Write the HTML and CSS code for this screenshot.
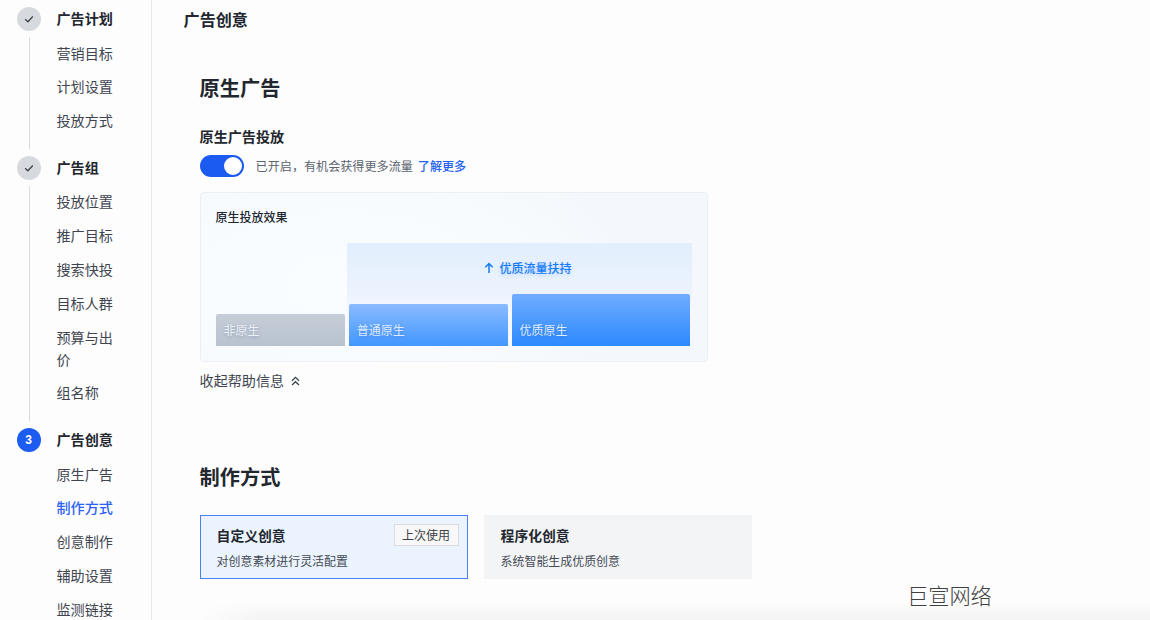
FILE: index.html
```html
<!DOCTYPE html>
<html lang="zh-CN">
<head>
<meta charset="utf-8">
<title>广告创意</title>
<link rel="stylesheet" href="styles.css">
</head>
<body>
<div class="app">
  <nav class="sidebar">
    <section class="step">
      <div class="rail">
        <span class="dot"><svg width="12" height="12" viewBox="0 0 12 12"><path d="M2.2 6.2 4.9 8.8 9.8 3.5"/></svg></span>
        <span class="line"></span>
      </div>
      <div class="step-body">
        <h4 class="step-title">广告计划</h4>
        <ul class="links"><li>营销目标</li><li>计划设置</li><li>投放方式</li></ul>
      </div>
    </section>
    <section class="step">
      <div class="rail">
        <span class="dot"><svg width="12" height="12" viewBox="0 0 12 12"><path d="M2.2 6.2 4.9 8.8 9.8 3.5"/></svg></span>
        <span class="line"></span>
      </div>
      <div class="step-body">
        <h4 class="step-title">广告组</h4>
        <ul class="links"><li>投放位置</li><li>推广目标</li><li>搜索快投</li><li>目标人群</li><li>预算与出价</li><li>组名称</li></ul>
      </div>
    </section>
    <section class="step">
      <div class="rail"><span class="dot current">3</span></div>
      <div class="step-body">
        <h4 class="step-title">广告创意</h4>
        <ul class="links"><li>原生广告</li><li class="active">制作方式</li><li>创意制作</li><li>辅助设置</li><li>监测链接</li></ul>
      </div>
    </section>
  </nav>
  <main class="main">
    <h1 class="page-title">广告创意</h1>
    <div class="content">
      <h2 class="section-title">原生广告</h2>
      <h3 class="field-title">原生广告投放</h3>
      <div class="switch-row">
        <span class="switch"><span class="knob"></span></span>
        <span class="hint">已开启，有机会获得更多流量</span>
        <a class="more">了解更多</a>
      </div>
      <div class="effect">
        <div class="effect-title">原生投放效果</div>
        <div class="chart">
          <div class="bar plain">非原生</div>
          <div class="boost">
            <div class="boost-label">
              <svg width="10" height="12" viewBox="0 0 10 12"><path d="M5 11V1.6M1.3 5.2 5 1.5 8.7 5.2"/></svg>
              <span>优质流量扶持</span>
            </div>
            <div class="boost-bars">
              <div class="bar normal">普通原生</div>
              <div class="bar premium">优质原生</div>
            </div>
          </div>
        </div>
      </div>
      <div class="collapse">
        <span>收起帮助信息</span>
        <svg width="9" height="10" viewBox="0 0 9 10"><path d="M1 4.7 4.5 1.4 8 4.7M1 9 4.5 5.7 8 9"/></svg>
      </div>
      <h2 class="section-title second">制作方式</h2>
      <div class="options">
        <div class="option selected">
          <div class="option-name">自定义创意</div>
          <div class="option-desc">对创意素材进行灵活配置</div>
          <span class="tag">上次使用</span>
        </div>
        <div class="option">
          <div class="option-name">程序化创意</div>
          <div class="option-desc">系统智能生成优质创意</div>
        </div>
      </div>
    </div>
    <div class="footer-shade"></div>
    <div class="signature">巨宣网络</div>
  </main>
</div>
</body>
</html>
```
FILE: styles.css
```css
* { box-sizing: border-box; }
body {
  margin: 0;
  background: #fdfdfd;
  color: #22262e;
  font-family: "Noto Sans CJK SC", sans-serif;
  font-size: 14.1px;
}
h1, h2, h3, h4, ul { margin: 0; padding: 0; }
svg { display: block; fill: none; stroke: currentColor; }

.app { display: flex; width: 1150px; height: 620px; overflow: hidden; }

/* Step navigation */
.sidebar {
  flex: none;
  width: 152px;
  padding: 7px 0 0 16.6px;
  border-right: 1px solid #e8e9eb;
}
.step { display: flex; gap: 15.9px; }
.rail { display: flex; flex-direction: column; align-items: center; width: 24px; }
.dot {
  display: flex;
  flex: none;
  align-items: center;
  justify-content: center;
  width: 24px;
  height: 24px;
  border-radius: 50%;
  background: #d6dade;
  color: #3e444d;
}
.dot svg { stroke-width: 1.3; }
.dot.current {
  background: #1c5cf0;
  color: #fff;
  font: bold 12px/24px "Liberation Sans", sans-serif;
}
.line { flex: 1; width: 1px; margin: 6px 0 7px 1px; background: #d9dbde; }
.step-body { padding-bottom: 18.6px; }
.step-title { height: 24px; margin-bottom: 4.8px; font-size: 14.1px; font-weight: 700; line-height: 22px; }
.links { width: 57px; list-style: none; color: #3f4550; line-height: 22px; }
.links li { padding: 5.9px 0; }
.links .active { color: #2b62f5; font-weight: 500; }

/* Main column */
.main { position: relative; flex: 1; padding: 7px 0 0 31.6px; }
.page-title { font-size: 16.1px; font-weight: 700; line-height: 24px; }
.content { padding: 42px 0 0 16px; }
.section-title { font-size: 20.2px; font-weight: 700; line-height: 30px; }
.field-title { margin-top: 22px; font-size: 14.1px; font-weight: 700; line-height: 22px; }
.switch-row { display: flex; align-items: center; height: 22px; margin-top: 8.4px; font-size: 12.1px; }
.switch {
  display: flex;
  align-items: center;
  justify-content: flex-end;
  width: 44px;
  height: 22px;
  padding: 2px;
  border-radius: 11px;
  background: #1b5bf0;
}
.knob { width: 18px; height: 18px; border-radius: 50%; background: #fff; }
.hint, .more { line-height: 20px; }
.hint { margin-left: 12px; color: #5c6470; }
.more { margin-left: 5px; color: #2460f2; font-weight: 500; }

.effect {
  width: 508.6px;
  height: 170.4px;
  margin-top: 14.2px;
  padding: 15.4px 15px 13px;
  border: 1px solid #edf0f3;
  border-radius: 4px;
  background: radial-gradient(ellipse 300px 150px at 28% 55%, #fafdff 0%, #f9fcff 40%, #f4f8fc 100%);
}
.effect-title { height: 18px; font-size: 12px; font-weight: 500; line-height: 18px; }
.chart { display: flex; align-items: flex-end; height: 103.5px; margin-top: 16.9px; gap: 2px; }
.bar {
  display: flex;
  align-items: flex-end;
  padding: 0 8px 6px;
  border-radius: 2px 2px 0 0;
  color: #dfecff;
  font-size: 12px;
  line-height: 20px;
  text-shadow: 0 1px 3px rgba(20, 60, 130, .25);
}
.plain { width: 129.4px; height: 32px; color: #eceff3; background: linear-gradient(#c5cdd8, #b8c2ce); }
.boost {
  display: flex;
  flex-direction: column;
  justify-content: space-between;
  width: 345.4px;
  height: 103.5px;
  padding: 15px 2px 0;
  background: linear-gradient(#e2eefd, #ecf3fd 50%, #f4f8fd 65%, #f5f9fd);
}
.boost-label {
  display: flex;
  justify-content: center;
  align-items: center;
  gap: 5px;
  height: 20px;
  padding-left: 17px;
  color: #127afb;
  font-size: 12px;
  font-weight: 500;
  text-shadow: 0 2px 4px rgba(18, 122, 251, .2);
}
.boost-label svg { margin-top: 1px; stroke-width: 1.5; }
.boost-bars { display: flex; align-items: flex-end; gap: 4px; }
.normal { width: 159px; height: 42px; background: linear-gradient(#8abbff, #4297ff); }
.premium { width: 179px; height: 52px; background: linear-gradient(#6facff, #2d8aff); }
.collapse { display: flex; align-items: center; gap: 7px; height: 22px; margin-top: 7.4px; color: #3f4550; }
.collapse svg { margin-top: 1px; stroke-width: 1.3; }
.second { margin-top: 71px; }

.options { display: flex; gap: 16px; margin-top: 23.1px; }
.option { position: relative; width: 268px; height: 63.4px; padding: 9px 17px; background: #f3f4f6; }
.option.selected { padding: 8px 16px; border: 1px solid #4a80f5; background: #ebf3fe; }
.option-name { font-size: 13.8px; font-weight: 700; line-height: 22px; }
.option-desc { margin-top: 5px; color: #444a54; font-size: 11.95px; line-height: 20px; }
.tag {
  position: absolute;
  top: 8px;
  right: 8px;
  width: 65px;
  height: 22px;
  border: 1px solid #d9dbde;
  background: #f8f8f8;
  color: #3a3f48;
  font-size: 12px;
  line-height: 20px;
  text-align: center;
}
.footer-shade {
  position: absolute;
  right: 0;
  bottom: 0;
  left: 48px;
  height: 18px;
  background: linear-gradient(rgba(0, 0, 0, 0), rgba(0, 0, 0, .04));
  -webkit-mask-image: linear-gradient(90deg, transparent, #000 60px);
  mask-image: linear-gradient(90deg, transparent, #000 60px);
}
.signature {
  position: absolute;
  top: 580px;
  left: 755px;
  color: #404040;
  font-size: 21.2px;
  font-weight: 300;
  line-height: 30px;
}
```
